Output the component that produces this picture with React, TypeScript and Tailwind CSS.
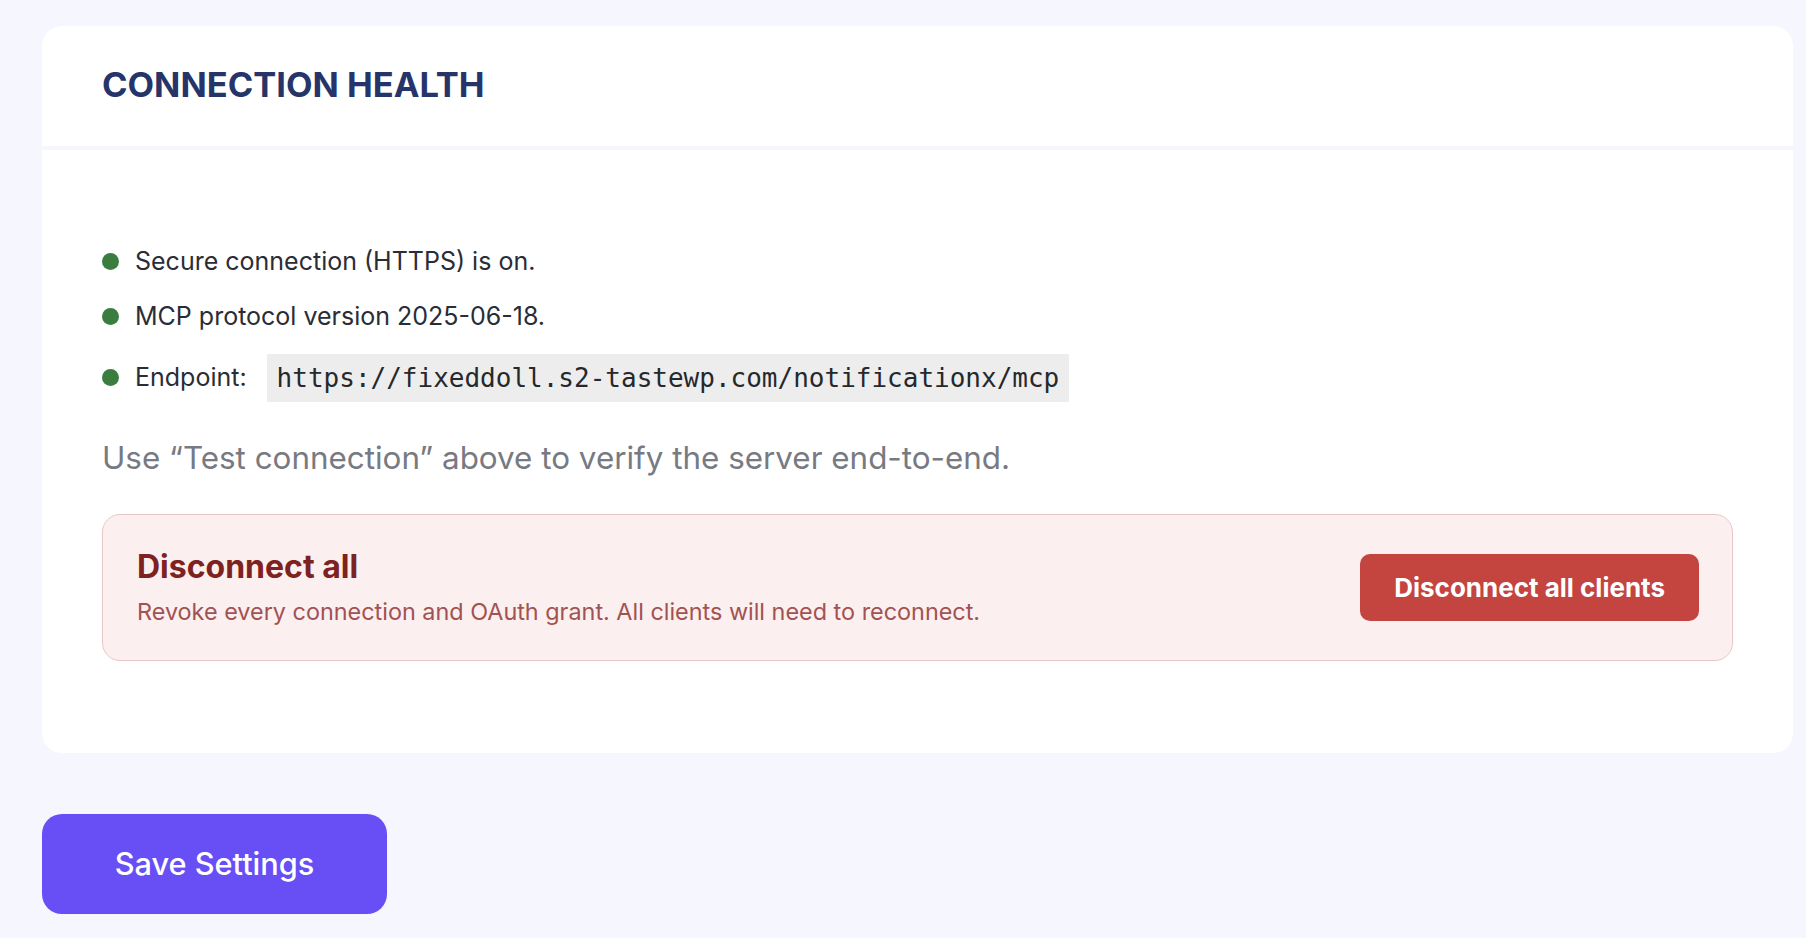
import React from "react";

const statusItems = [
  { label: "Secure connection (HTTPS) is on." },
  { label: "MCP protocol version 2025-06-18." },
];

const endpoint = "https://fixeddoll.s2-tastewp.com/notificationx/mcp";

function StatusDot() {
  return <span className="w-[17px] h-[17px] rounded-full bg-[#3b7d3f] shrink-0" />;
}

export default function App() {
  return (
    <div
      className="min-h-screen bg-[#f5f6fe] pl-[42px] pr-[13px] pt-[26px] pb-[25px]"
      style={{ fontFamily: "Inter, 'Noto Sans', sans-serif" }}
    >
      {/* Connection health card */}
      <section className="bg-white rounded-[20px] overflow-hidden">
        <header className="h-[124px] flex items-center px-[60px] pb-[3px] border-b-4 border-[#f5f6fe]">
          <h2 className="text-[34.5px] font-bold text-[#27346a]">CONNECTION HEALTH</h2>
        </header>

        <div className="px-[60px] pt-[84px] pb-[92px]">
          <ul>
            {statusItems.map((item) => (
              <li key={item.label} className="h-[55px] flex items-center gap-[16px]">
                <StatusDot />
                <span className="text-[25px] text-[#2a2d35]">{item.label}</span>
              </li>
            ))}
            <li className="h-[67px] flex items-center gap-[16px]">
              <StatusDot />
              <span className="text-[25px] text-[#2a2d35]">Endpoint:</span>
              <code
                className="ml-[4px] bg-[#ededed] px-[10px] py-[9px] leading-[30px] text-[26px] text-[#26282c]"
                style={{ fontFamily: "'DejaVu Sans Mono', 'Liberation Mono', monospace" }}
              >
                {endpoint}
              </code>
            </li>
          </ul>

          <p className="mt-[25px] text-[31.4px] leading-[44px] text-[#777a82]">
            Use “Test connection” above to verify the server end-to-end.
          </p>

          {/* Danger zone */}
          <div className="mt-[34px] flex items-center justify-between rounded-[18px] border border-[#e9c6c6] bg-[#fbefef] pl-[34px] pr-[33px] py-[33px]">
            <div>
              <h3 className="text-[32px] leading-[38px] font-bold text-[#7d2121]">Disconnect all</h3>
              <p className="mt-[11px] text-[23.4px] leading-[30px] text-[#a25252]">
                Revoke every connection and OAuth grant. All clients will need to reconnect.
              </p>
            </div>
            <button className="h-[67px] px-[34px] rounded-[10px] bg-[#c4443f] text-white text-[26px] font-bold">
              Disconnect all clients
            </button>
          </div>
        </div>
      </section>

      <button className="mt-[61px] w-[345px] h-[100px] rounded-[20px] bg-[#674ff5] text-white text-[30.7px] font-medium">
        Save Settings
      </button>
    </div>
  );
}
